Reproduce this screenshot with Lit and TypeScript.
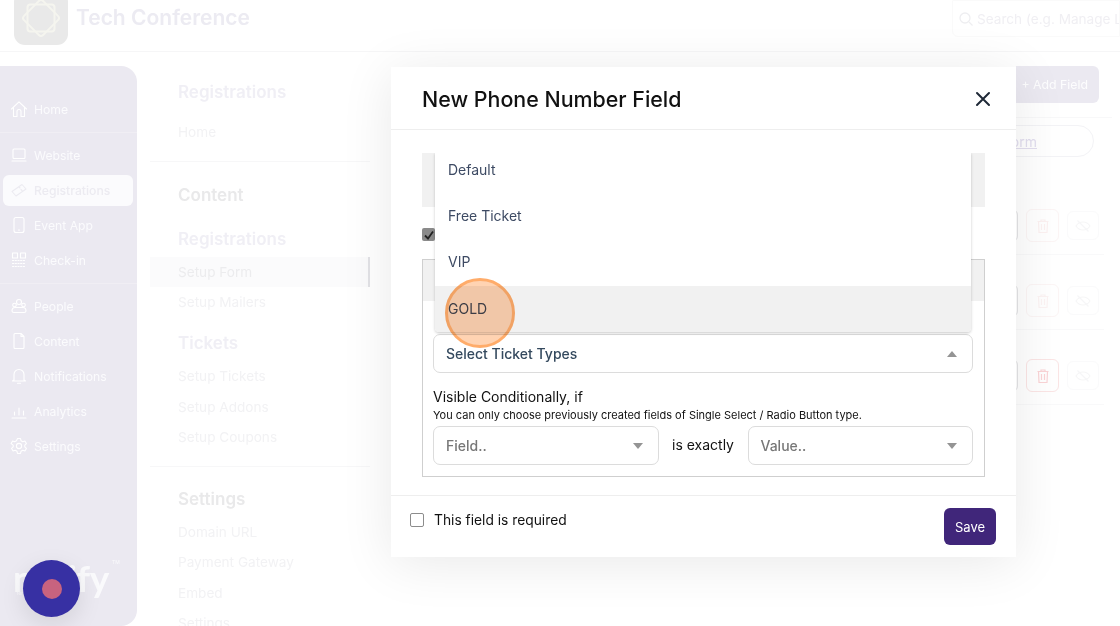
import { LitElement, html, css, svg } from "lit";
import { customElement } from "lit/decorators.js";

const ic = (body: unknown) => html`<svg class="ic" viewBox="0 0 18 18" fill="none" stroke="#fff" stroke-width="1.100" stroke-linecap="round" stroke-linejoin="round">${body}</svg>`;

const icons: Record<string, unknown> = {
  home: ic(svg`<path d="M1.500 9 9 1.800 16.500 9M3.500 7.500V16.500H7V11.500a2 2 0 0 1 4 0V16.500h3.500V7.500"/>`),
  web: ic(svg`<rect x="3" y="3" width="12" height="9.500" rx="1"/><path d="M2 15h14"/>`),
  ticket: ic(svg`<path d="M2 10.500 12 3.500l4 4.500-10 7zM9 6l1 1M11 8.500l1 1"/>`),
  app: ic(svg`<rect x="4" y="1.500" width="10" height="15" rx="2"/><path d="M8.500 14h1"/>`),
  qr: ic(svg`<rect x="2.500" y="2" width="5" height="5"/><rect x="10.500" y="2" width="5" height="5"/><path stroke-dasharray="1.200 1.500" d="M2.500 9.500h13M2.500 12.500h13M2.500 15.500h13"/>`),
  people: ic(svg`<circle cx="9" cy="5" r="2.500"/><circle cx="4.500" cy="8" r="1.800"/><circle cx="13.500" cy="8" r="1.800"/><path d="M2 14c0-2 1-3.500 3-3.500h8c2 0 3 1.500 3 3.500 0 1-1 1.500-2 1.500H4c-1 0-2-.5-2-1.500z"/>`),
  doc: ic(svg`<path d="M4 2.500a1 1 0 0 1 1-1h6l3 3v11a1 1 0 0 1-1 1H5a1 1 0 0 1-1-1zM11 1.500V4.500h3"/>`),
  bell: ic(svg`<path d="M4 13V7.500a5 5 0 0 1 10 0V13l1.500 1h-13zM7.500 16.200h3"/>`),
  chart: ic(svg`<path d="M2 16h14M4.500 13v-3M9 13V6M13.500 13V9"/>`),
  gear: ic(svg`<circle cx="9" cy="9" r="2.600"/><path d="M7.500 1.500h3l.5 2.200 1.800 1 2.100-.7 1.500 2.600-1.600 1.500v1.800l1.600 1.500-1.500 2.600-2.100-.7-1.800 1-.5 2.200h-3l-.5-2.200-1.800-1-2.100.7-1.500-2.600 1.600-1.500V8.100L1.100 6.600l1.500-2.600 2.100.7 1.800-1z"/>`),
};

const side = [
  ["home", "Home"], "-", ["web", "Website"], ["ticket", "Registrations", "on"], ["app", "Event App"], ["qr", "Check-in"], "-",
  ["people", "People"], ["doc", "Content"], ["bell", "Notifications"], ["chart", "Analytics"], ["gear", "Settings"],
];

const caret = (up = false) => html`<svg class="caret" viewBox="0 0 10 6"><path fill="#949494" d=${up ? "M0 6 5 0l5 6z" : "M0 0h10L5 6z"}/></svg>`;

@customElement("app-root")
export class AppRoot extends LitElement {
  static styles = css`
    :host { display: block; position: relative; width: 1120px; height: 626px; overflow: hidden; background: #fff;
      font-family: Inter, "Liberation Sans", sans-serif; color: #111; filter: blur(0.35px); }
    .top { height: 51px; border-bottom: 1px solid #f6f6f7; box-sizing: content-box; display: flex; align-items: flex-start; padding-left: 14px; }
    .logo { width: 54px; height: 54px; margin-top: -9px; border-radius: 11px; background: #e9e9e9; flex: none; display: flex; align-items: center; justify-content: center; }
    .brand { margin: 3px 0 0 8px; font-size: 21px; line-height: 30px; font-weight: 600; color: #ecebf2; flex: 1; }
    .search { width: 168px; height: 37px; box-sizing: border-box; border: 1px solid #fafafa; border-radius: 0 0 0 6px; display: flex; align-items: center; gap: 3px; padding-left: 5px; font-size: 13.600px; color: #f0eff3; white-space: nowrap; overflow: hidden; flex: none; }
    .search svg { width: 16px; height: 16px; flex: none; }
    .body { display: flex; margin-top: 14px; height: 560px; }
    .side { width: 137px; flex: none; background: #ebe9f1; border-radius: 0 16px 16px 0; padding-top: 25.500px; box-sizing: border-box; }
    .item { height: 35px; display: flex; align-items: center; font-size: 12.200px; color: #fbfbfd; padding-left: 10px; gap: 6px; position: relative; }
    .item.on { color: #ecebf1; font-weight: 500; }
    .item.on::before { content: ""; position: absolute; left: 3px; right: 4px; top: 2px; bottom: 2px; background: #fbfbfd; border-radius: 6px; }
    .item > * { position: relative; }
    .ic { width: 18px; height: 18px; flex: none; }
    .item.on .ic { stroke: #ecebf1; }
    .sd { height: 11px; display: flex; align-items: center; }
    .sd i { display: block; height: 1px; width: 100%; background: #f0eef4; }
    .panel { width: 220px; margin-left: 13px; flex: none; padding-top: 12px; box-sizing: border-box; }
    .h { height: 28px; line-height: 28px; padding-left: 28px; font-size: 17px; font-weight: 600; color: #f0eff5; }
    .h.dark { color: #e9e9ea; }
    .l { height: 30.400px; line-height: 30px; padding-left: 28px; font-size: 13.600px; color: #f2f2f4; }
    .l.sel { background: #fbfbfc; border-right: 2px solid #e2e2e6; color: #ececee; }
    .hr { height: 1px; background: #f7f7f8; }
    .mt4 { margin-top: 4px; } .mt11 { margin-top: 11px; } .mt12 { margin-top: 11.500px; } .mt14 { margin-top: 13.600px; }
    .mt15 { margin-top: 13.500px; } .mt16 { margin-top: 16px; } .mt18 { margin-top: 18px; } .mt19 { margin-top: 19px; }
    .main { flex: 1; display: flex; flex-direction: column; align-items: flex-end; padding-right: 21px; }
    .add { width: 83px; height: 37px; background: #ebe9f1; border-radius: 0 6px 6px 0; color: #fdfdfe; font-size: 12.300px; white-space: nowrap; display: flex; align-items: center; justify-content: flex-end; padding-right: 11px; box-sizing: border-box; flex: none; }
    .mainhr { width: 130px; height: 1px; background: #f8f8f9; margin: 14px -13px 0 0; flex: none; }
    .pill { width: 200px; height: 32px; margin: 7px 5px 0 0; padding-right: 56px; box-sizing: border-box; border: 1px solid #f3f3f6; border-radius: 16px; display: flex; align-items: center; justify-content: flex-end; color: #e2deef; font-size: 14px; text-decoration: underline; flex: none; }
    .rows { margin-top: 23px; width: 200px; margin-right: -5px; }
    .row { height: 75px; box-sizing: border-box; display: flex; justify-content: flex-end; gap: 8px; border-bottom: 1px solid #f9f9fa; padding: 0 5px 12px 0; align-items: flex-end; }
    .btn { width: 33px; height: 33px; box-sizing: border-box; border: 1px solid #fcf5f5; border-radius: 6px; display: flex; align-items: center; justify-content: center; }
    .btn.edit { border-color: #e4e4e6; }
    .btn.eye { width: 32px; height: 29px; margin-bottom: 2px; border-color: #fafafb; }
    .btn.red { border-color: #fbe5e5; }
    .btn svg { width: 16px; height: 16px; }
    .overlay { position: absolute; left: 391px; top: 67px; }
    .modal { width: 625px; height: 490px; background: #fff; box-shadow: 0 6px 50px rgba(0,0,0,.09); display: flex; flex-direction: column; position: relative; }
    .mh { height: 62px; border-bottom: 1px solid #eeeeee; display: flex; align-items: center; justify-content: space-between; padding: 0 25px 0 31px; flex: none; }
    .mt { font-size: 21.400px; font-weight: 500; color: #111; margin-top: 1px; }
    .x { width: 16px; height: 16px; margin-top: 2px; }
    .mb { flex: 1; padding: 23px 31px 0; min-height: 0; }
    .grey { height: 54px; background: #f1f1f1; }
    .chk { width: 13px; height: 13px; margin-top: 21px; background: #8a8a8a; border-radius: 2px; display: flex; align-items: center; justify-content: center; }
    .chk svg { width: 10px; height: 10px; }
    .box { height: 218px; margin-top: 18px; border: 1px solid #cfcfcf; box-sizing: border-box; padding: 0 11px 0 10px; position: relative; }
    .band { height: 41px; margin: 0 -11px 0 -10px; background: #f1f1f1; }
    .select { height: 39px; border: 1px solid #dcdcdc; border-radius: 7px; box-sizing: border-box; display: flex; align-items: center; justify-content: space-between; padding: 0 15px 0 12px; font-size: 14px; background: #fff; }
    .select.tt { margin-top: 33px; color: #34495e; font-weight: 500; font-size: 14px; }
    .select.ph { color: #777; font-weight: 500; flex: 1; }
    .caret { width: 10px; height: 6px; }
    .vc { margin-top: 15px; font-size: 14px; line-height: 18px; color: #111; }
    .hint { font-size: 11px; line-height: 14px; margin-top: 2px; color: #111; }
    .cond { display: flex; align-items: center; margin-top: 4px; font-size: 14px; color: #111; }
    .cond > span { width: 89px; text-align: center; flex: none; margin-top: -3px; }
    .mf { height: 61px; border-top: 1px solid #eeeeee; box-sizing: content-box; display: flex; padding: 0 20px 0 19px; align-items: center; justify-content: space-between; flex: none; }
    .req { display: flex; align-items: center; gap: 10px; font-size: 13.800px; margin-top: -14px; color: #111; }
    .cb { width: 12px; height: 12px; border: 1px solid #8c8c8c; border-radius: 2px; box-sizing: content-box; background: #fff; }
    .save { width: 52px; height: 37px; background: #40267a; color: #fff; border-radius: 6px; font-size: 13px; display: flex; align-items: center; justify-content: center; }
    .dd { position: absolute; left: 44px; top: 86px; width: 536px; height: 179px; background: #fff; overflow: hidden; border-radius: 0 0 4px 4px; box-shadow: 0 1px 3px rgba(0,0,0,.22); clip-path: inset(0 -6px -6px -6px); }
    .opt { height: 46px; padding: 0 0 2px 13px; box-sizing: border-box; display: flex; align-items: center; font-size: 14px; color: #3d4a63; }
    .opt:first-child { margin-top: -6px; }
    .opt.hi { background: #f1f1f1; margin-top: 1px; }
    .mark { position: absolute; left: 445px; top: 278px; width: 70px; height: 70px; box-sizing: border-box; border-radius: 50%; background: #ffd3b2; border: 3px solid #ffac6a; mix-blend-mode: multiply; }
    .logo2 { position: absolute; left: 13px; top: 555px; font-family: Lato, sans-serif; font-size: 37px; font-weight: 700; line-height: 46px; color: #fafafc; letter-spacing: -.3px; }
    .small { position: absolute; left: 17px; top: 591px; font-size: 4px; line-height: 6px; color: #fafafc; }
    .tm { position: absolute; left: 112px; top: 559px; font-size: 5px; line-height: 6px; color: #fafafc; }
    .dot { position: absolute; left: 23px; top: 560px; width: 57px; height: 57px; border-radius: 50%; background: #3730a3; display: flex; align-items: center; justify-content: center; box-shadow: 0 8px 24px rgba(0,0,0,.1); }
    .dot i { width: 20px; height: 20px; border-radius: 50%; background: #c8637f; }
  `;

  render() {
    const trash = (c: string) => html`<svg viewBox="0 0 16 16" fill="none" stroke=${c} stroke-width="1.200"><path d="M2.500 3.500h11M6 3.500V2h4v1.500M3.500 3.500l.5 11h8l.5-11M6.500 6v6M9.500 6v6"/></svg>`;
    const eye = html`<svg viewBox="0 0 16 16" fill="none" stroke="#f6f6f7" stroke-width="1.200"><path d="M1 8s2.500-4 7-4 7 4 7 4-2.500 4-7 4-7-4-7-4zM2.500 2.500l11 11"/></svg>`;
    const row = (cls: string, c: string) => html`<div class="row"><div class="btn edit"></div><div class="btn ${cls}">${trash(c)}</div><div class="btn eye">${eye}</div></div>`;
    return html`
      <div class="top">
        <div class="logo">
          <svg width="46" height="46" viewBox="0 0 46 46" fill="none" stroke="#f5f5ef" stroke-width="2">
            <rect x="9.500" y="9.500" width="27" height="27" rx="3"/>
            <rect x="9.500" y="9.500" width="27" height="27" rx="3" transform="rotate(45 23 23)"/>
          </svg>
        </div>
        <div class="brand">Tech Conference</div>
        <div class="search">
          <svg viewBox="0 0 16 16" fill="none" stroke="#eeeef1" stroke-width="1.300"><circle cx="7" cy="7" r="5"/><path d="m11 11 3.500 3.500"/></svg>
          <span>Search (e.g. Manage Layouts)</span>
        </div>
      </div>
      <div class="body">
        <nav class="side">
          ${side.map((s) => s === "-" ? html`<div class="sd"><i></i></div>` : html`
            <div class="item ${(s as string[])[2] ?? ""}">${icons[(s as string[])[0]]}<span>${(s as string[])[1]}</span></div>`)}
        </nav>
        <div class="panel">
          <div class="h">Registrations</div>
          <div class="l mt11">Home</div>
          <div class="hr mt14"></div>
          <div class="h dark mt19">Content</div>
          <div class="h mt16">Registrations</div>
          <div class="l sel mt4">Setup Form</div>
          <div class="l">Setup Mailers</div>
          <div class="h mt12">Tickets</div>
          <div class="l mt4">Setup Tickets</div>
          <div class="l">Setup Addons</div>
          <div class="l">Setup Coupons</div>
          <div class="hr mt15"></div>
          <div class="h dark mt18">Settings</div>
          <div class="l mt4">Domain URL</div>
          <div class="l">Payment Gateway</div>
          <div class="l">Embed</div>
          <div class="l">Settings</div>
        </div>
        <div class="main">
          <div class="add">+ Add Field</div>
          <div class="mainhr"></div>
          <div class="pill">View Form</div>
          <div class="rows">
            ${row("", "#fcf1f1")}
            ${row("", "#fcf3f3")}
            ${row("red", "#fad4d6")}
          </div>
        </div>
      </div>

      <div class="logo2">notify</div>
      <div class="small">NEW</div>
      <div class="tm">TM</div>

      <div class="overlay">
        <div class="modal">
          <div class="mh">
            <div class="mt">New Phone Number Field</div>
            <svg class="x" viewBox="0 0 16 16" fill="none" stroke="#1f2937" stroke-width="2" stroke-linecap="round"><path d="m2 2 12 12M14 2 2 14"/></svg>
          </div>
          <div class="mb">
            <div class="grey"></div>
            <div class="chk"><svg viewBox="0 0 10 10" fill="none" stroke="#222" stroke-width="1.800"><path d="m1 5.500 3 3 5-7"/></svg></div>
            <div class="box">
              <div class="band"></div>
              <div class="select tt"><span>Select Ticket Types</span>${caret(true)}</div>
              <div class="vc">Visible Conditionally, if</div>
              <div class="hint">You can only choose previously created fields of Single Select / Radio Button type.</div>
              <div class="cond">
                <div class="select ph"><span>Field..</span>${caret()}</div>
                <span>is exactly</span>
                <div class="select ph"><span>Value..</span>${caret()}</div>
              </div>
            </div>
          </div>
          <div class="mf">
            <label class="req"><div class="cb"></div>This field is required</label>
            <div class="save">Save</div>
          </div>
          <div class="dd">
            <div class="opt">Default</div>
            <div class="opt">Free Ticket</div>
            <div class="opt">VIP</div>
            <div class="opt hi">GOLD</div>
          </div>
        </div>
      </div>
      <div class="mark"></div>
      <div class="dot"><i></i></div>
    `;
  }
}
